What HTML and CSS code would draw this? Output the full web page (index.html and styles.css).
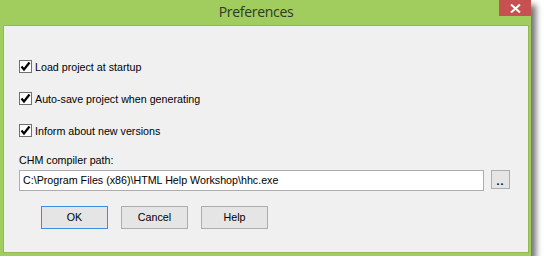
FILE: index.html
```html
<!DOCTYPE html>
<html lang="en">
<head>
  <meta charset="UTF-8" />
  <title>Preferences</title>
  <link rel="stylesheet" href="styles.css">
</head>
<body>
  <div class="window">
    <div class="titlebar">
      <span class="title">Preferences</span>
      <span class="close">
        <svg width="11" height="9" viewBox="0 0 11 9"><path d="M1 0.5 L10 8.5 M10 0.5 L1 8.5" stroke="#fff" stroke-width="2"/></svg>
      </span>
    </div>
    <div class="client">
      <label class="check"><span class="box"><svg width="11" height="11" viewBox="0 0 11 11"><path d="M1.5 5.5 L4 8.5 L9.5 1.5" fill="none" stroke="#000" stroke-width="2.2"/></svg></span>Load project at startup</label>
      <label class="check"><span class="box"><svg width="11" height="11" viewBox="0 0 11 11"><path d="M1.5 5.5 L4 8.5 L9.5 1.5" fill="none" stroke="#000" stroke-width="2.2"/></svg></span>Auto-save project when generating</label>
      <label class="check"><span class="box"><svg width="11" height="11" viewBox="0 0 11 11"><path d="M1.5 5.5 L4 8.5 L9.5 1.5" fill="none" stroke="#000" stroke-width="2.2"/></svg></span>Inform about new versions</label>

      <div class="field-label">CHM compiler path:</div>
      <div class="path-row">
        <div class="input">C:\Program Files (x86)\HTML Help Workshop\hhc.exe</div>
        <div class="browse">..</div>
      </div>

      <div class="buttons">
        <div class="btn default">OK</div>
        <div class="btn">Cancel</div>
        <div class="btn">Help</div>
      </div>
    </div>
  </div>
</body>
</html>
```

FILE: styles.css
```css
body {
  margin: 0;
  background: #fff;
  font-family: 'Liberation Sans', Arial, sans-serif;
  font-size: 10.7px;
  color: #000;
}
.window {
  width: 531px;
  height: 256px;
  background: #a1cc5e;
  box-shadow: 5px 5px 6px rgba(0, 0, 0, 0.55);
  box-sizing: border-box;
  display: flex;
  flex-direction: column;
  padding: 0 2px 3px 3px;
}
.titlebar {
  height: 25px;
  position: relative;
  display: flex;
  justify-content: center;
  flex-shrink: 0;
}
.title {
  font-family: 'Open Sans', 'Noto Sans', sans-serif;
  font-size: 14px;
  letter-spacing: -0.3px;
  color: #2e3a26;
  margin-top: 2px;
  margin-right: 20px;
}
.close {
  position: absolute;
  top: 0;
  right: -2px;
  width: 32px;
  height: 16px;
  background: #c75050;
  display: flex;
  align-items: center;
  justify-content: center;
}
.client {
  flex: 1;
  background: #f0f0f0;
  border: 1px solid #8fbb52;
  padding: 34px 0 0 15px;
}
.check {
  display: flex;
  align-items: center;
  height: 13px;
  margin-bottom: 19px;
}
.box {
  width: 11px;
  height: 11px;
  border: 1px solid #707070;
  background: #fff;
  margin-right: 3px;
  display: flex;
}
.field-label {
  margin-top: -2px;
  height: 13px;
}
.path-row {
  display: flex;
  margin-top: 3px;
  gap: 7px;
}
.input {
  height: 19px;
  line-height: 19px;
  border: 1px solid #abadb3;
  background: #fff;
  padding-left: 3px;
  width: 460px;
}
.browse {
  width: 17px;
  height: 17px;
  border: 1px solid #adadad;
  background: #e5e5e5;
  text-align: center;
  line-height: 20px;
  font-weight: bold;
  letter-spacing: 1px;
}
.buttons {
  display: flex;
  gap: 13px;
  margin: 15px 0 0 22px;
}
.btn {
  width: 65px;
  height: 21px;
  line-height: 21px;
  text-align: center;
  border: 1px solid #adadad;
  background: #e5e5e5;
}
.btn.default {
  border-color: #3c8ee0;
}
```
